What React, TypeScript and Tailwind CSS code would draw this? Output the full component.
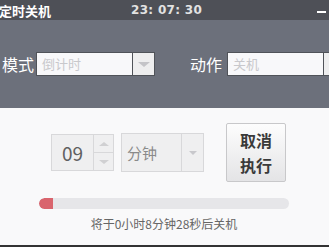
import React from "react";

export default function App() {
  const font = { fontFamily: '"Noto Sans CJK SC", "Liberation Sans", sans-serif' };
  return (
    <div className="w-[329px] h-[247px] overflow-hidden flex flex-col bg-[#f9f9fa]" style={font}>
      {/* title bar */}
      <div className="h-[20px] bg-[#4e5057] flex items-center relative shrink-0">
        <span className="text-[13px] font-bold text-white leading-none ml-[-1px] shrink-0">定时关机</span>
        <span className="text-[12px] font-bold text-[#e2e2e2] leading-none ml-[80px] tracking-[0.3px] shrink-0" style={{ fontFamily: '"DejaVu Sans", sans-serif' }}>23: 07: 30</span>
        <div className="absolute left-[317px] top-[11px] w-[9px] h-[2px] bg-white" />
      </div>
      {/* gray panel */}
      <div className="h-[88px] bg-[#6c707b] flex items-start pt-[32px] shrink-0 overflow-hidden">
        <span className="text-[16px] text-white leading-[24px] ml-[2px] w-[34px] shrink-0">模式</span>
        <div className="flex h-[24px] border border-[#505359] bg-[#f8f8fa] w-[119px] shrink-0">
          <div className="flex-1 text-[13px] text-[#c8c8cc] leading-[22px] pl-[5px]">倒计时</div>
          <div className="w-[22px] border-l border-[#505359] bg-[#eeeeef] flex items-center justify-center">
            <div className="w-0 h-0 border-l-[6px] border-r-[6px] border-t-[5px] border-l-transparent border-r-transparent border-t-[#c4c4c8]" />
          </div>
        </div>
        <span className="text-[16px] text-white leading-[24px] ml-[35px] w-[37px] shrink-0">动作</span>
        <div className="flex h-[24px] border border-[#505359] bg-[#f8f8fa] w-[120px] shrink-0">
          <div className="w-[95px] text-[13px] text-[#c8c8cc] leading-[22px] pl-[5px] shrink-0">关机</div>
          <div className="flex-1 border-l border-[#505359] bg-[#eeeeef]" />
        </div>
      </div>
      {/* white area */}
      <div className="flex-1 flex flex-col relative">
        <div className="flex items-start mt-[15px]">
          <div className="ml-[51px] mt-[11px] flex h-[37px] border border-[#d8d8da] bg-[#efeff0]">
            <div className="w-[41px] text-[19px] text-[#606060] leading-[35px] text-center">09</div>
            <div className="w-[20px] border-l border-[#d8d8da] flex flex-col">
              <div className="flex-1 flex items-center justify-center border-b border-[#d8d8da]">
                <div className="w-0 h-0 border-l-[5px] border-r-[5px] border-b-[4px] border-l-transparent border-r-transparent border-b-[#d0d0d2]" />
              </div>
              <div className="flex-1 flex items-center justify-center">
                <div className="w-0 h-0 border-l-[5px] border-r-[5px] border-t-[4px] border-l-transparent border-r-transparent border-t-[#d0d0d2]" />
              </div>
            </div>
          </div>
          <div className="ml-[7px] mt-[10px] flex h-[39px] w-[83px] border border-[#d8d8da] bg-[#efeff0]">
            <div className="flex-1 text-[15px] text-[#8a8a8a] leading-[37px] pl-[5px]">分钟</div>
            <div className="w-[22px] border-l border-[#d8d8da] flex items-center justify-center">
              <div className="w-0 h-0 border-l-[4px] border-r-[4px] border-t-[4px] border-l-transparent border-r-transparent border-t-[#c8c8cc]" />
            </div>
          </div>
          <button className="ml-[22px] w-[60px] h-[59px] border border-[#c8c8ca] rounded-[2px] bg-gradient-to-b from-[#fdfdfd] to-[#e4e4e6] text-[16px] font-bold text-[#3a3a3a] leading-[25px] flex flex-col items-center justify-center">
            <span>取消</span>
            <span>执行</span>
          </button>
        </div>
        <div className="mx-[39px] mt-[16px] w-[250px] h-[11px] rounded-full bg-[#e6e6e9] overflow-hidden">
          <div className="h-full w-[14px] bg-[#d9646d] rounded-l-full" />
        </div>
        <div className="text-[12px] text-[#666] text-center mt-[7px] ml-[-1px] leading-[16px]">将于0小时8分钟28秒后关机</div>
        <div className="absolute bottom-0 left-0 right-0 h-[2px] bg-[#333]" />
      </div>
    </div>
  );
}
